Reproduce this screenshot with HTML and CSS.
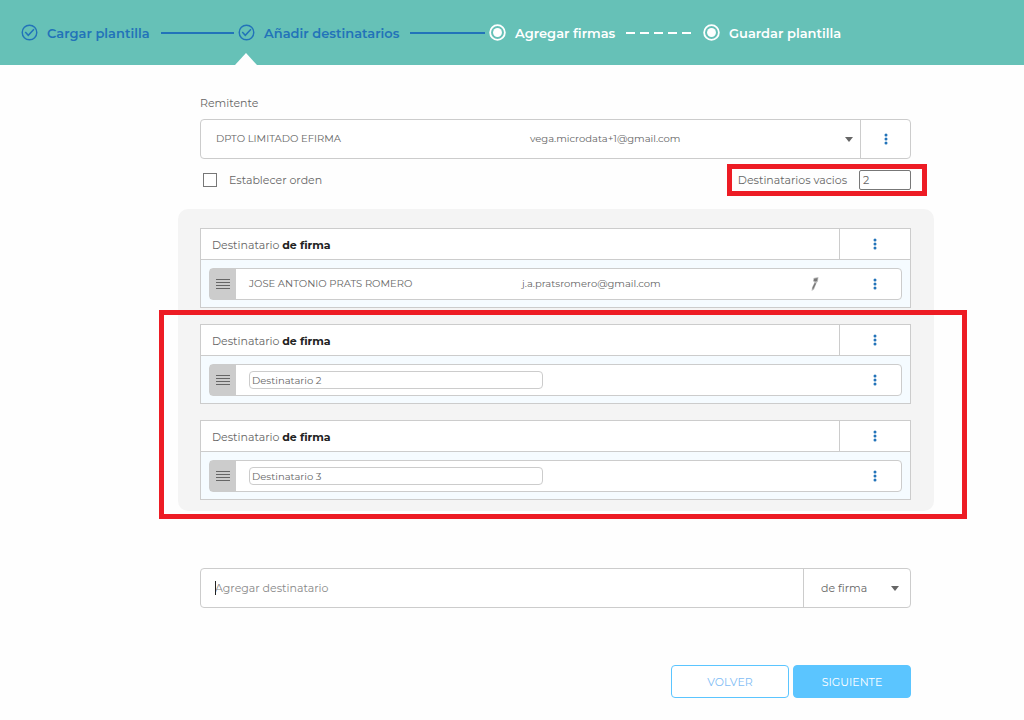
FILE: index.html
```html
<!DOCTYPE html>
<html lang="es">
<head>
<meta charset="utf-8">
<meta name="viewport" content="width=device-width, initial-scale=1">
<title>Añadir destinatarios</title>
<link rel="stylesheet" href="styles.css">
</head>
<body>
<svg class="defs" aria-hidden="true">
  <symbol id="check" viewBox="0 0 18 18"><circle cx="9" cy="9" r="7.7" fill="none" stroke="currentColor" stroke-width="1.5"/><path d="M4.5 8.5l3.2 3.5 6-6.5" fill="none" stroke="currentColor" stroke-width="1.6"/></symbol>
  <symbol id="radio" viewBox="0 0 18 18"><circle cx="9" cy="9" r="7.8" fill="none" stroke="currentColor" stroke-width="1.9"/><circle cx="9" cy="9" r="4.7" fill="currentColor"/></symbol>
  <symbol id="dots" viewBox="0 0 4 12"><circle cx="2" cy="2" r="1.5" fill="currentColor"/><circle cx="2" cy="6" r="1.5" fill="currentColor"/><circle cx="2" cy="10" r="1.5" fill="currentColor"/></symbol>
  <symbol id="grip" viewBox="0 0 14 12"><path d="M0 1.5h14M0 4.5h14M0 7.5h14M0 10.5h14" stroke="currentColor" stroke-width="1"/></symbol>
  <symbol id="pen" viewBox="0 0 10 16"><path d="M3.6 2L8.4 1 8 5.2 6.6 7 4 13.5 1.6 15 2 11.5 4.4 6.5 3 5z" fill="#bbb"/><path d="M4.2 2.8L7.6 2 7 5 5.6 5.6 3.8 4.8zM4.8 7L6 7.4 3.6 12.6 2.4 13.6 2.8 11z" fill="#777"/></symbol>
</svg>

<header class="topbar">
  <ol class="steps">
    <li class="step step-done"><svg class="step-icon"><use href="#check"/></svg><span>Cargar plantilla</span><i class="line"></i></li>
    <li class="step step-done step-current" aria-current="step"><svg class="step-icon"><use href="#check"/></svg><span>Añadir destinatarios</span><i class="line"></i></li>
    <li class="step"><svg class="step-icon"><use href="#radio"/></svg><span>Agregar firmas</span><i class="line line-dashed"></i></li>
    <li class="step"><svg class="step-icon"><use href="#radio"/></svg><span>Guardar plantilla</span></li>
  </ol>
</header>

<main class="page">
  <label class="title" for="sender">Remitente</label>
  <div class="box">
    <div class="sender">
      <select id="sender" class="sender-select"><option>DPTO LIMITADO EFIRMA</option></select>
      <span class="sender-mail">vega.microdata+1@gmail.com</span>
      <i class="arrow"></i>
    </div>
    <button class="menu menu-sender" type="button" aria-label="Opciones del remitente"><svg class="dots"><use href="#dots"/></svg></button>
  </div>

  <div class="options">
    <label class="order"><input type="checkbox" class="tick">Establecer orden</label>
    <div class="empty">
      <label for="empty">Destinatarios vacios</label>
      <input id="empty" class="count" type="text" inputmode="numeric" value="2">
      <div class="mark mark-count"></div>
    </div>
  </div>

  <section class="panel">
    <article class="card">
      <div class="card-head"><h2 class="card-title">Destinatario <strong>de firma</strong></h2><button class="menu menu-card" type="button" aria-label="Opciones"><svg class="dots"><use href="#dots"/></svg></button></div>
      <div class="card-body">
        <div class="item">
          <button class="grip" type="button" aria-label="Mover"><svg class="grip-icon"><use href="#grip"/></svg></button>
          <div class="person"><span>JOSE ANTONIO PRATS ROMERO</span><span>j.a.pratsromero@gmail.com</span></div>
          <svg class="pen"><use href="#pen"/></svg>
          <button class="menu menu-item" type="button" aria-label="Opciones del destinatario"><svg class="dots"><use href="#dots"/></svg></button>
        </div>
      </div>
    </article>
    <article class="card">
      <div class="card-head"><h2 class="card-title">Destinatario <strong>de firma</strong></h2><button class="menu menu-card" type="button" aria-label="Opciones"><svg class="dots"><use href="#dots"/></svg></button></div>
      <div class="card-body">
        <div class="item">
          <button class="grip" type="button" aria-label="Mover"><svg class="grip-icon"><use href="#grip"/></svg></button>
          <div class="person"><input class="name" type="text" aria-label="Nombre del destinatario" value="Destinatario 2"></div>
          <button class="menu menu-item" type="button" aria-label="Opciones del destinatario"><svg class="dots"><use href="#dots"/></svg></button>
        </div>
      </div>
    </article>
    <article class="card">
      <div class="card-head"><h2 class="card-title">Destinatario <strong>de firma</strong></h2><button class="menu menu-card" type="button" aria-label="Opciones"><svg class="dots"><use href="#dots"/></svg></button></div>
      <div class="card-body">
        <div class="item">
          <button class="grip" type="button" aria-label="Mover"><svg class="grip-icon"><use href="#grip"/></svg></button>
          <div class="person"><input class="name" type="text" aria-label="Nombre del destinatario" value="Destinatario 3"></div>
          <button class="menu menu-item" type="button" aria-label="Opciones del destinatario"><svg class="dots"><use href="#dots"/></svg></button>
        </div>
      </div>
    </article>
    <div class="mark mark-cards"></div>
  </section>

  <div class="box add">
    <div class="add-field"><input class="add-input" type="text" aria-label="Agregar destinatario" placeholder="Agregar destinatario"><i class="cursor"></i></div>
    <div class="kind"><select class="kind-select" aria-label="Tipo de destinatario"><option>de firma</option></select><i class="arrow"></i></div>
  </div>

  <div class="actions">
    <button class="btn" type="button">VOLVER</button>
    <button class="btn btn-primary" type="button">SIGUIENTE</button>
  </div>
</main>
</body>
</html>
```
FILE: styles.css
```css
* { box-sizing: border-box; }
body {
  margin: 0;
  background: #fefefe;
  color: #666;
  font: 11px/16px Montserrat, Inter, "Open Sans", sans-serif;
}
button, input, select { margin: 0; padding: 0; font: inherit; color: inherit; }
svg { display: block; flex: none; }
.defs { position: absolute; width: 0; height: 0; }

.topbar { padding-left: 21px; background: #66c1b7; }
.steps {
  display: grid;
  grid-template-columns: 217fr 251fr 214fr 321fr;
  margin: 0;
  padding: 0;
  list-style: none;
}
.step {
  position: relative;
  display: flex;
  align-items: center;
  height: 65px;
  gap: 9px;
  color: #fff;
  font-size: 13px;
  font-weight: 600;
  white-space: nowrap;
}
.step-done { color: #2273b9; }
.step-icon { width: 17px; height: 17px; }
.line { flex: 1; height: 2px; margin: 0 4px 0 2px; background: #2273b9; }
.line-dashed {
  margin-right: 9px;
  background: repeating-linear-gradient(90deg, #fff 0 9px, transparent 9px 14px);
}
.step-current::after {
  content: "";
  position: absolute;
  left: -3px;
  bottom: 0;
  border: 11px solid transparent;
  border-top: 0;
  border-bottom: 12px solid #fefefe;
}

.page { padding: 30px 113px 22px 200px; }
.title { display: block; margin-bottom: 8px; }
.box {
  display: flex;
  height: 40px;
  border: 1px solid #ccc;
  border-radius: 4px;
  background: #fff;
}
.sender { flex: 1; display: grid; grid-template-columns: 329fr 330fr; align-items: center; font-size: 10px; }
.sender-select {
  grid-area: 1 / 1 / 2 / 3;
  width: 100%;
  height: 38px;
  padding-left: 15px;
  border: 0;
  background: none;
  appearance: none;
}
.sender-mail { grid-area: 1 / 2; pointer-events: none; }
.arrow {
  width: 0;
  height: 0;
  border: 4px solid transparent;
  border-top: 5px solid #666;
  border-bottom: 0;
  pointer-events: none;
}
.sender .arrow { grid-area: 1 / 2; justify-self: end; margin-right: 7px; }
.menu {
  display: flex;
  align-items: center;
  justify-content: center;
  border: 0;
  background: none;
  color: #2273b9;
}
.menu-sender { width: 50px; border-left: 1px solid #ccc; }
.dots { width: 4px; height: 12px; }

.options { display: flex; justify-content: space-between; height: 42px; align-items: center; }
.order { display: flex; align-items: center; gap: 12px; padding-left: 3px; }
.tick { width: 14px; height: 14px; appearance: none; border: 1px solid #777; background: #fff; }
.empty { position: relative; display: flex; align-items: center; gap: 12px; }
.count { width: 52px; height: 20px; padding-left: 3px; border: 1px solid #777; border-radius: 2px; background: #fff; }
.mark { position: absolute; border: 5px solid #ed1c24; pointer-events: none; }
.mark-count { inset: -6px -16px -6px -11px; }

.panel {
  position: relative;
  display: flex;
  flex-direction: column;
  gap: 16px;
  margin: 8px -23px 0 -22px;
  padding: 19px 23px 11px 22px;
  border-radius: 10px;
  background: #f4f4f4;
}
.mark-cards { inset: 101px -33px -8px -19px; }
.card { border: 1px solid #ccc; background: #f5fbff; }
.card-head { display: flex; height: 31px; border-bottom: 1px solid #ccc; background: #fff; }
.card-title { flex: 1; margin: 0; padding-left: 11px; font-size: 11px; font-weight: 400; line-height: 32px; }
.card-title strong { color: #222; font-weight: 700; }
.menu-card { width: 71px; border-left: 1px solid #ccc; }
.card-body { padding: 8px 8px 7px; }
.item {
  display: flex;
  align-items: center;
  height: 32px;
  border: 1px solid #ccc;
  border-radius: 4px;
  background: #fff;
  font-size: 10px;
}
.grip {
  display: flex;
  align-items: center;
  justify-content: center;
  align-self: stretch;
  width: 26px;
  border: 0;
  background: #ccc;
  color: #666;
}
.grip-icon { width: 14px; height: 12px; }
.person { flex: 1; display: grid; grid-template-columns: 273fr 288fr; padding-left: 13px; }
.name { width: 294px; height: 18px; padding-left: 2px; border: 1px solid #ccc; border-radius: 4px; background: #fff; }
.pen { width: 10px; height: 16px; margin-right: 29px; }
.menu-item { width: 52px; align-self: stretch; }

.add { margin-top: 57px; }
.add-field { position: relative; flex: 1; }
.add-input { width: 100%; height: 38px; padding-left: 14px; border: 0; background: none; outline: 0; }
.add-input::placeholder { color: #888; opacity: 1; }
.cursor { position: absolute; left: 14px; top: 12px; width: 1px; height: 14px; background: #222; }
.kind { display: grid; align-items: center; width: 107px; border-left: 1px solid #ccc; }
.kind-select { grid-area: 1 / 1; width: 100%; height: 38px; padding-left: 17px; border: 0; background: none; appearance: none; }
.kind .arrow { grid-area: 1 / 1; justify-self: end; margin-right: 11px; }

.actions { display: flex; justify-content: flex-end; gap: 4px; margin-top: 57px; }
.btn { width: 118px; height: 33px; border: 1px solid #5bc5ff; border-radius: 4px; background: #fff; color: #7fbdf5; }
.btn-primary { background: #5bc5ff; color: #fff; }
```
